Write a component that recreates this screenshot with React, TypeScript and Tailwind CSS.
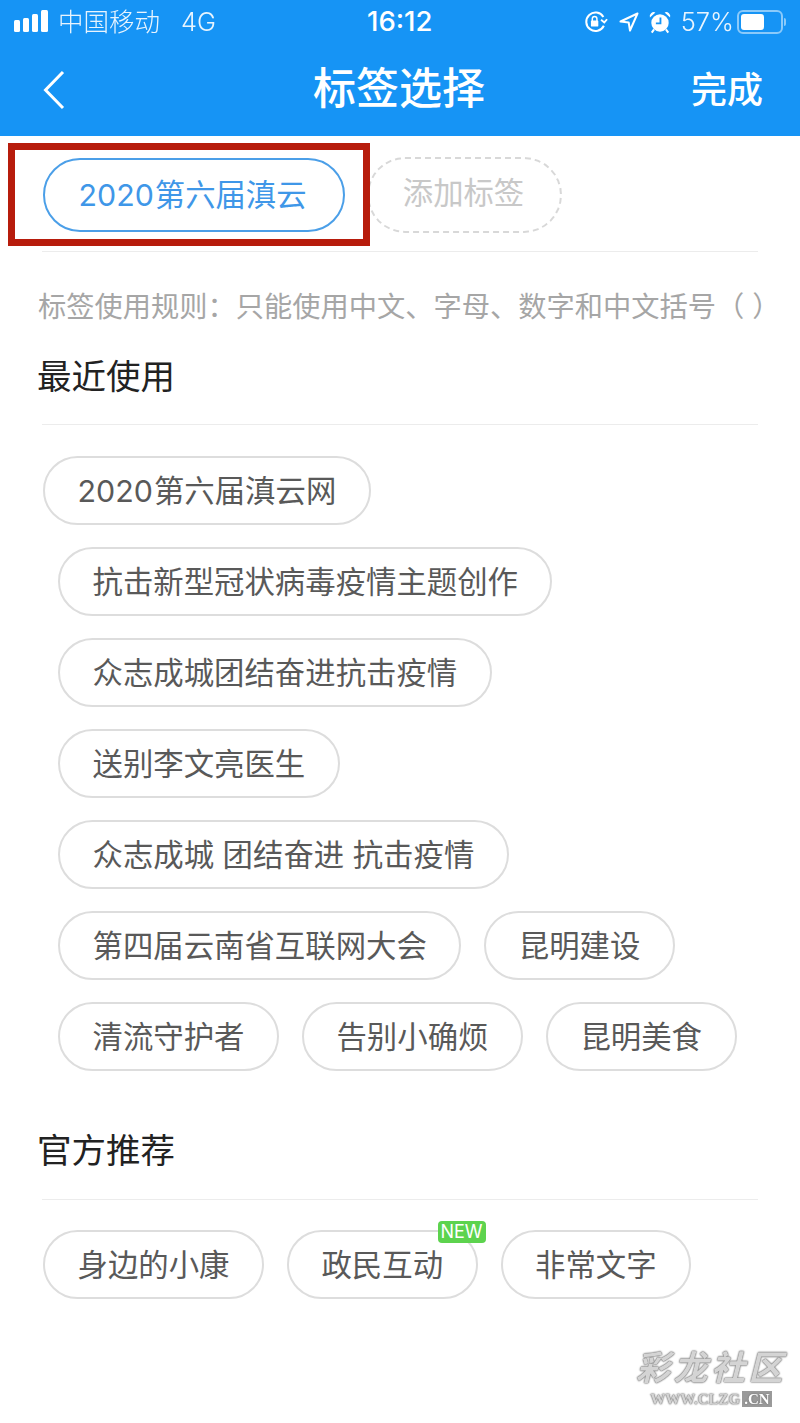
const FONT = "font-['Inter','Noto_Sans_CJK_SC',sans-serif]"

const recent = [
  { indent: 'ml-[43px]', tags: ['2020第六届滇云网'] },
  { indent: 'ml-[58px]', tags: ['抗击新型冠状病毒疫情主题创作'] },
  { indent: 'ml-[58px]', tags: ['众志成城团结奋进抗击疫情'] },
  { indent: 'ml-[58px]', tags: ['送别李文亮医生'] },
  { indent: 'ml-[58px]', tags: ['众志成城 团结奋进 抗击疫情'] },
  { indent: 'ml-[58px]', tags: ['第四届云南省互联网大会', '昆明建设'] },
  { indent: 'ml-[58px]', tags: ['清流守护者', '告别小确烦', '昆明美食'] },
]

const Chip = ({ label, isNew }: { label: string; isNew?: boolean }) => {
  // the year sits a little apart from the Chinese text that follows it
  const year = label.match(/^\d+/)?.[0]
  return (
    <div className="relative flex h-[69px] items-center rounded-full border-2 border-[#dddddd] px-[32.5px] pt-[2px] text-[30.4px] leading-none whitespace-pre text-[#595959]">
      {year && <span className="mr-[1px]">{year}</span>}
      {year ? label.slice(year.length) : label}
      {isNew && (
        <span className="absolute -top-[11px] right-[-10px] flex h-[22px] w-[48px] items-center justify-center rounded-[4px] bg-[#5dd34e] text-[18px] leading-none tracking-normal text-white">
          NEW
        </span>
      )}
    </div>
  )
}

const SectionHead = ({ title, className, gap }: { title: string; className: string; gap: string }) => (
  <div className={className}>
    <h2 className="ml-[37px] text-[34.5px] leading-[44px] font-normal text-[#222222]">{title}</h2>
    <div className={`mx-[42px] h-[1px] bg-[#ececec] ${gap}`} />
  </div>
)

const StatusBar = () => (
  <div className="relative flex h-[44px] items-center justify-between px-[14px] text-white">
    <div className="flex items-center">
      <svg width="35" height="24" viewBox="0 0 35 24" fill="white">
        <rect x="0" y="10" width="6" height="12" rx="1.5" />
        <rect x="9" y="8" width="6" height="14" rx="1.5" />
        <rect x="18" y="4" width="6" height="18" rx="1.5" />
        <rect x="27" y="0" width="7" height="22" rx="1.5" />
      </svg>
      <span className="ml-[9px] text-[25.5px] leading-none font-light opacity-90">中国移动</span>
      <span className="ml-[21px] text-[25.5px] leading-none font-light opacity-90">4G</span>
    </div>
    <span className="absolute left-[367px] text-[27.5px] leading-none font-medium">16:12</span>
    <div className="flex items-center">
      <svg width="24" height="24" viewBox="0 0 26 24" fill="none" stroke="white" strokeWidth="2.2">
        <path d="M21 6.500A10 10 0 1 0 21.500 16" />
        <path d="M18.500 9.500l3.500 3 3-3.500" strokeWidth="2" />
        <rect x="7.500" y="10.500" width="8" height="6.500" rx="1" fill="white" stroke="none" />
        <path d="M9 11V8.500a2.500 2.500 0 0 1 5 0V11" strokeWidth="1.600" />
      </svg>
      <svg className="ml-[11px]" width="20" height="20" viewBox="0 0 20 20" fill="none" stroke="white" strokeWidth="2" strokeLinejoin="round">
        <path d="M18.500 1.500L1.500 9.500l8.200 1 1.300 8z" />
      </svg>
      <svg className="ml-[10px]" width="22" height="24" viewBox="0 0 24 26" fill="white">
        <circle cx="12" cy="14" r="9.500" />
        <path d="M1 8a4.500 4.500 0 0 1 6-5.500zM23 8a4.500 4.500 0 0 0-6-5.500z" />
        <path d="M5.500 21l-2.500 3.500M18.500 21l2.500 3.500" stroke="white" strokeWidth="2.200" />
        <path d="M12.500 8V14.500H7.500" fill="none" stroke="#1694f5" strokeWidth="2" />
      </svg>
      <span className="ml-[10px] text-[25.5px] leading-none font-light opacity-90">57%</span>
      <div className="ml-[3px] flex items-center">
        <div className="flex h-[24px] w-[46px] items-center rounded-[6px] border-2 border-white/50 p-[2px]">
          <div className="h-full w-[23px] rounded-[3px] bg-white" />
        </div>
        <div className="ml-[1px] h-[8px] w-[2px] rounded-r-sm bg-white/50" />
      </div>
    </div>
  </div>
)

export default function App() {
  return (
    <div className={`relative h-[1423px] w-[800px] overflow-hidden bg-white ${FONT}`}>
      <header className="h-[136px] bg-[#1694f5]">
        <StatusBar />
        <div className="relative flex h-[92px] items-center justify-between pr-[37px] pl-[43px] text-white">
          <svg width="24" height="40" viewBox="0 0 24 40" fill="none" stroke="white" strokeWidth="3">
            <path d="M20 2L2.500 20 20 38" />
          </svg>
          <h1 className="absolute inset-x-0 -top-[2px] flex h-full items-center justify-center pr-[2px] text-[43px] leading-none font-medium">
            标签选择
          </h1>
          <span className="text-[36px] leading-none font-medium">完成</span>
        </div>
      </header>

      <div className="mt-[21px] ml-[43px] flex items-center">
        <div className="flex h-[74px] w-[302px] items-center justify-center rounded-full border-2 border-[#4b9fe8] pr-[3px] text-[30.35px] leading-none text-[#3f97e8]">
          <span className="mr-[1px]">2020</span>第六届滇云
        </div>
        <div className="ml-[22px] flex h-[76px] w-[195px] items-center justify-center rounded-full border-2 border-dashed border-[#d8d8d8] pr-[2px] pb-[3px] text-[30.35px] leading-none text-[#c8c8c8]">
          添加标签
        </div>
      </div>
      <div className="mx-[42px] mt-[18px] h-[1px] bg-[#ececec]" />

      <p className="mt-[35px] ml-[38px] text-[28.25px] leading-[40px] whitespace-nowrap text-[#a6a6a6]">
        标签使用规则：只能使用中文、字母、数字和中文括号（ ）
      </p>

      <SectionHead title="最近使用" className="mt-[28px]" gap="mt-[25px]" />
      <div className="mt-[31px] flex flex-col gap-[22px]">
        {recent.map((row, i) => (
          <div key={i} className={`flex gap-[23px] ${row.indent}`}>
            {row.tags.map((tag) => (
              <Chip key={tag} label={tag} />
            ))}
          </div>
        ))}
      </div>

      <SectionHead title="官方推荐" className="mt-[58px]" gap="mt-[26px]" />
      <div className="mt-[30px] ml-[43px] flex gap-[23px]">
        <Chip label="身边的小康" />
        <Chip label="政民互动" isNew />
        <Chip label="非常文字" />
      </div>

      {/* red annotation drawn over the screenshot */}
      <div className="absolute top-[143px] left-[8px] h-[103px] w-[362px] border-[7px] border-[#b71c0c]" />

      {/* watermark */}
      <div className="absolute top-[1341px] left-[635px] flex w-[152px] flex-col items-center text-[#d4d4d4] blur-[0.5px] [text-shadow:0_0_2px_#808080,0_0_2px_#808080,0_0_1px_#808080]">
        <span className="font-['Noto_Sans_CJK_SC',serif] text-[34px] leading-[50px] font-bold tracking-[3.5px] italic">彩龙社区</span>
        <span className="font-['Liberation_Serif',serif] text-[15px] leading-[17px] font-bold">
          WWW.CLZG<span className="ml-[2px] bg-[#9a9a9a] px-[2px] text-white">.CN</span>
        </span>
      </div>
    </div>
  )
}
